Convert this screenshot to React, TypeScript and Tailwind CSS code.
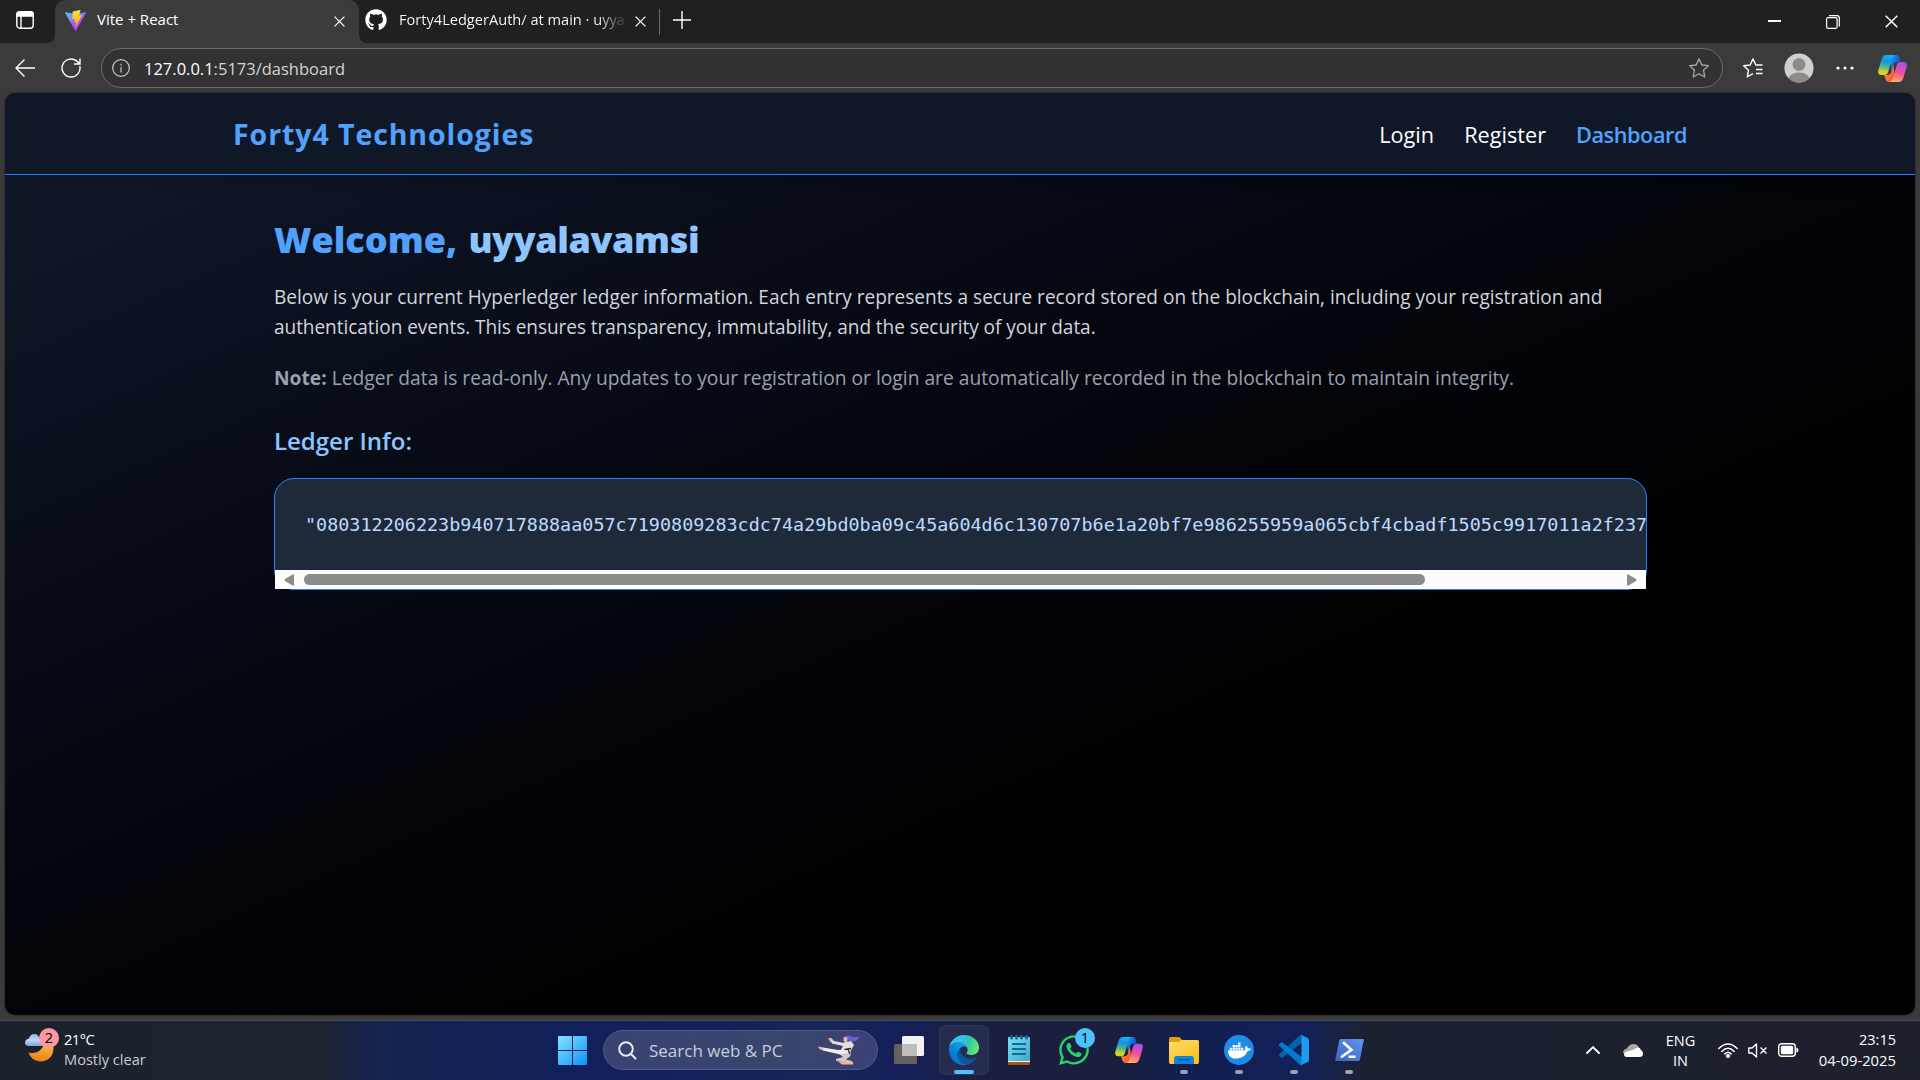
import type { ReactNode } from "react";
import { FaDocker, FaGithub, FaWhatsapp } from "react-icons/fa";

const HASH =
  '"080312206223b940717888aa057c7190809283cdc74a29bd0ba09c45a604d6c130707b6e1a20bf7e986255959a065cbf4cbadf1505c9917011a2f237';

function ViteLogo() {
  return (
    <svg viewBox="0 0 256 257" className="h-[21px] w-[21px]">
      <defs>
        <linearGradient id="viteA" x1="0" y1="0" x2="0.6" y2="0.8">
          <stop offset="0" stopColor="#41d1ff" />
          <stop offset="1" stopColor="#bd34fe" />
        </linearGradient>
        <linearGradient id="viteB" x1="0.4" y1="0" x2="0.5" y2="1">
          <stop offset="0" stopColor="#ffea83" />
          <stop offset="0.1" stopColor="#ffdd35" />
          <stop offset="1" stopColor="#ffa800" />
        </linearGradient>
      </defs>
      <path fill="url(#viteA)" d="M255.153 37.938L134.897 252.976c-2.483 4.44-8.862 4.466-11.382.048L.875 37.958c-2.746-4.814 1.371-10.646 6.827-9.67l120.385 21.517a6.537 6.537 0 0 0 2.322-.004l117.867-21.483c5.438-.991 9.574 4.796 6.877 9.62Z" />
      <path fill="url(#viteB)" d="M185.432.063L96.44 17.501a3.268 3.268 0 0 0-2.634 3.014l-5.474 92.456a3.268 3.268 0 0 0 3.997 3.378l24.777-5.718c2.318-.535 4.413 1.507 3.936 3.838l-7.361 36.047c-.495 2.426 1.782 4.5 4.151 3.78l15.304-4.649c2.372-.72 4.652 1.36 4.15 3.788l-11.698 56.621c-.732 3.542 3.979 5.473 5.943 2.437l1.313-2.028l72.516-144.72c1.215-2.423-.88-5.186-3.54-4.672l-25.505 4.922c-2.396.462-4.435-1.77-3.759-4.114l16.646-57.705c.677-2.35-1.37-4.583-3.769-4.113Z" />
    </svg>
  );
}

function Cross({ className }: { className: string }) {
  return (
    <svg viewBox="0 0 13 13" className={className} fill="none" stroke="#fff" strokeWidth="1.5">
      <path d="M.7.7l11.6 11.6M12.3.7L.7 12.3" />
    </svg>
  );
}

function CopilotLogo({ className }: { className: string }) {
  return (
    <svg viewBox="0 0 29 27" className={className}>
      <defs>
        <linearGradient id="cpL" x1="0.5" y1="0" x2="0.35" y2="1">
          <stop offset="0" stopColor="#0fb4f2" />
          <stop offset="0.3" stopColor="#1a8fe3" />
          <stop offset="0.6" stopColor="#52b788" />
          <stop offset="0.85" stopColor="#c5d82c" />
          <stop offset="1" stopColor="#fdc90a" />
        </linearGradient>
        <linearGradient id="cpR" x1="0.6" y1="0" x2="0.4" y2="1">
          <stop offset="0" stopColor="#a94df0" />
          <stop offset="0.5" stopColor="#f0509b" />
          <stop offset="0.85" stopColor="#fb8c6c" />
          <stop offset="1" stopColor="#ffb35c" />
        </linearGradient>
        <linearGradient id="cpT" x1="0" y1="0" x2="1" y2="0.6">
          <stop offset="0.3" stopColor="#1b9cf0" />
          <stop offset="1" stopColor="#1136b8" />
        </linearGradient>
        <linearGradient id="cpB" x1="0" y1="0" x2="1" y2="0.6">
          <stop offset="0" stopColor="#ff9a3c" />
          <stop offset="1" stopColor="#f04a35" />
        </linearGradient>
      </defs>
      <path fill="url(#cpT)" d="M8.5 0H18c2.3 0 3 1.2 3.6 3.3L22.7 7h-3.4c-2 0-3 .9-3.6 2.8l-2 7L12 6z" />
      <path fill="url(#cpB)" d="M20.5 27H11c-2.3 0-3-1.2-3.6-3.3L6.3 19.9h3.4c2 0 3-.9 3.6-2.8l2-7L17 21z" />
      <path fill="url(#cpL)" d="M8.5 0H17c-2 .9-2.8 3-3.6 6l-3 10.3c-.8 2.6-1.8 3.6-4 3.6H3.2C.4 19.9-.4 17.8.4 15L3.6 4.2C4.6 1.2 5.9 0 8.5 0z" />
      <path fill="url(#cpR)" d="M20.5 27H12c2-.9 2.8-3 3.6-6l3-10.3c.8-2.6 1.8-3.6 4-3.6h3.2c2.8 0 3.6 2.1 2.8 4.9L25.4 22.8C24.4 25.8 23.1 27 20.5 27z" />
    </svg>
  );
}

function EdgeLogo() {
  return (
    <svg viewBox="0 0 256 256" className="h-[30px] w-[30px]">
      <defs>
        <linearGradient id="edA" x1="0.2" y1="0.5" x2="1" y2="0.5">
          <stop offset="0" stopColor="#0c59a4" />
          <stop offset="1" stopColor="#114a8b" />
        </linearGradient>
        <linearGradient id="edB" x1="0.9" y1="0.3" x2="0.3" y2="0.9">
          <stop offset="0" stopColor="#1b9de2" />
          <stop offset="0.3" stopColor="#1595df" />
          <stop offset="0.7" stopColor="#0680d7" />
          <stop offset="1" stopColor="#0078d4" />
        </linearGradient>
        <linearGradient id="edC" x1="0" y1="0.3" x2="1" y2="0.6">
          <stop offset="0" stopColor="#35c1f1" />
          <stop offset="0.35" stopColor="#34c1ed" />
          <stop offset="0.65" stopColor="#36c7a0" />
          <stop offset="1" stopColor="#66eb6e" />
        </linearGradient>
      </defs>
      <path fill="url(#edA)" d="M231.07 190.54c-3.4 1.8-6.9 3.3-10.54 4.69a101.9 101.9 0 0 1-35.85 6.46c-47.21 0-88.35-32.44-88.35-74.15.12-11.38 6.42-21.85 16.46-27.3-42.8 1.8-53.8 46.37-53.8 72.56 0 73.88 68.15 81.5 82.8 81.5 7.96 0 19.9-2.28 27.15-4.55l1.3-.4a128.34 128.34 0 0 0 66.62-52.78 4 4 0 0 0-5.8-6.01z" />
      <path fill="url(#edB)" d="M105.73 241.42a79.2 79.2 0 0 1-22.74-21.32 80.72 80.72 0 0 1 29.53-119.98c3.12-1.47 8.46-4.1 15.56-4a32.5 32.5 0 0 1 25.69 13.1 31.88 31.88 0 0 1 6.35 18.64c0-.2 24.49-79.6-80.11-79.6C36.03 48.27 0 90.03 0 126.7a130.48 130.48 0 0 0 12.05 55.99 128 128 0 0 0 156.39 67.11 75.53 75.53 0 0 1-62.61-8.32z" />
      <path fill="url(#edC)" d="M152.32 148.87c-.8 1.06-3.3 2.5-3.3 5.66 0 2.6 1.7 5.12 4.73 7.23 14.37 10 41.49 8.68 41.56 8.68 10.77-.02 21.14-2.95 30.4-8.46a61.98 61.98 0 0 0 30.4-53.43c.26-22.36-8-37.22-11.34-43.82C223.6 23.24 177.78.01 128 .01a128 128 0 0 0-128 126.17c.48-36.55 36.8-66.05 80-66.05 3.5 0 23.46.34 42.01 10.07 16.34 8.58 24.9 18.94 30.86 29.21 6.18 10.67 7.28 24.15 7.28 29.52 0 5.37-2.74 13.33-7.83 19.94z" />
    </svg>
  );
}

function VsCodeLogo() {
  return (
    <svg viewBox="0 0 100 100" className="h-[30px] w-[30px]">
      <path fill="#0065a9" d="M96.46 10.8L75.86.88a6.23 6.23 0 0 0-7.1 1.2L1.3 63.55a4.17 4.17 0 0 0 0 6.16l5.5 5.01a4.17 4.17 0 0 0 5.33.24L93.4 13.4C96.1 11.33 100 13.26 100 16.66v-.24a6.25 6.25 0 0 0-3.54-5.63z" />
      <path fill="#007acc" d="M96.46 89.2l-20.6 9.92a6.23 6.23 0 0 1-7.1-1.2L1.3 36.45a4.17 4.17 0 0 1 0-6.16l5.5-5.01a4.17 4.17 0 0 1 5.33-.24L93.4 86.6C96.1 88.67 100 86.74 100 83.34v.24a6.25 6.25 0 0 1-3.54 5.63z" />
      <path fill="#1f9cf0" d="M75.86 99.13a6.24 6.24 0 0 1-7.1-1.21c2.3 2.3 6.24.67 6.24-2.59V4.67c0-3.26-3.94-4.89-6.24-2.59a6.24 6.24 0 0 1 7.1-1.21l20.6 9.91A6.25 6.25 0 0 1 100 16.41v67.17a6.25 6.25 0 0 1-3.54 5.63z" />
    </svg>
  );
}

function NotepadIcon() {
  return (
    <svg viewBox="0 0 22 30" className="h-[30px] w-[22px]">
      <defs>
        <linearGradient id="np" x1="0" y1="0" x2="1" y2="1">
          <stop offset="0" stopColor="#7fdcf2" />
          <stop offset="1" stopColor="#3fa9cd" />
        </linearGradient>
      </defs>
      <rect y="23" width="22" height="7" rx="1" fill="#a4571c" />
      <rect y="22" width="22" height="5" fill="#f4f4f4" />
      <rect y="2" width="22" height="24" rx="1" fill="url(#np)" />
      <g fill="#0f6c93">
        <rect x="2" y="0" width="3" height="4.5" rx="1.5" />
        <rect x="7" y="0" width="3" height="4.5" rx="1.5" />
        <rect x="12" y="0" width="3" height="4.5" rx="1.5" />
        <rect x="17" y="0" width="3" height="4.5" rx="1.5" />
        <rect x="4" y="8" width="14" height="2" />
        <rect x="4" y="13" width="14" height="2" />
        <rect x="4" y="18" width="14" height="2" />
      </g>
    </svg>
  );
}

function FolderIcon() {
  return (
    <svg viewBox="0 0 30 27" className="h-[27px] w-[30px]">
      <defs>
        <linearGradient id="fo" x1="0" y1="0" x2="0.6" y2="1">
          <stop offset="0" stopColor="#ffdc6b" />
          <stop offset="1" stopColor="#fdbf1f" />
        </linearGradient>
      </defs>
      <path fill="#e3a008" d="M0 2Q0 0 1.5 0H9.5Q10.5 0 11.2.8L13 3H28V12H0z" />
      <path fill="url(#fo)" d="M0 5H10L12.5 3H28.5Q30 3 30 4.5V25Q30 27 28.5 27H1.5Q0 27 0 25z" />
      <path fill="#1283d8" d="M5 27V22Q5 19 8 19H22Q25 19 25 22V27z" />
      <path fill="#0b5394" d="M8.5 22.2H21.5V23.4H8.5z" />
    </svg>
  );
}

function PowerShellIcon() {
  return (
    <svg viewBox="0 0 29 22" className="h-[22px] w-[29px]">
      <defs>
        <linearGradient id="ps" x1="1" y1="0" x2="0" y2="1">
          <stop offset="0" stopColor="#5f97f2" />
          <stop offset="1" stopColor="#3a63c0" />
        </linearGradient>
      </defs>
      <path fill="url(#ps)" d="M5.6 0H28Q29 0 28.8 1L24.8 21Q24.5 22 23.5 22H1Q0 22 .2 21L4.2 1Q4.5 0 5.6 0z" />
      <path d="M8 3.3L16.5 10.8L6 18.3M13.5 17.8H20.5" fill="none" stroke="#fff" strokeWidth="2.6" />
    </svg>
  );
}

function KarateFigure() {
  return (
    <svg viewBox="0 0 42 30" className="h-[30px] w-[42px]">
      <path fill="#6a5fd0" d="M25 3Q27 -.5 31 .8Q35 3 41 1.5Q40 6 35 6.5L29.5 5z" />
      <path fill="#eab99a" d="M25.5 2.5L29 2L29.5 6.5L27 7.5Q25 6 25.5 2.5z" />
      <path fill="#eab99a" d="M10 3.5L13.5 3L16 6L13 7.5z" />
      <path fill="#e6dede" d="M13 5.5L25 7.8L33 6L36 10L32 17L22 16.5L25 11L14 8.5z" />
      <path fill="#f3ece9" d="M5 12.5L20 15L32 15L33 19L28 22.5L22 19.5L5 15.5z" />
      <path fill="#eab99a" d="M0 11.5L5.5 12.5L5 15.5L1.5 14z" />
      <path fill="#cfc6c9" d="M22 19.5L32 17.5L32.5 21L28 24.5L34 26L34 28L18 26L18 24L25 22z" />
      <path fill="#eab99a" d="M20 26.5L35 27L35 29.5L24 29.5z" />
      <path d="M26.5 14.5L33 13.5M30 14.5L32 19" stroke="#2c2b3c" strokeWidth="1.4" />
    </svg>
  );
}

function WeatherIcon() {
  return (
    <svg viewBox="0 0 34 34" className="h-[34px] w-[34px]">
      <defs>
        <linearGradient id="moon" x1="0.6" y1="0" x2="0.3" y2="1">
          <stop offset="0" stopColor="#f8b73a" />
          <stop offset="1" stopColor="#ee7a1e" />
        </linearGradient>
        <linearGradient id="cloud" x1="0" y1="0" x2="0" y2="1">
          <stop offset="0" stopColor="#8fb0e6" />
          <stop offset="0.5" stopColor="#c5d6f4" />
          <stop offset="1" stopColor="#7fa2de" />
        </linearGradient>
      </defs>
      <path fill="url(#moon)" d="M3.5 20.5Q14 23.5 19.5 12L28 13Q29.5 19 26 24.5Q22 29.5 15 29.5Q6 28.5 3.5 20.5z" />
      <path fill="url(#cloud)" d="M4 14Q0 14 0 10.5Q.5 7 4 6.5Q5 2 9.5 2Q13 2 14 5.5Q19 6 19 10.5Q19 14 16 14z" />
    </svg>
  );
}

function TaskItem({ running = false, children }: { running?: boolean; children: ReactNode }) {
  return (
    <div className="relative flex h-[50px] w-[55px] items-center justify-center">
      <div className="flex">{children}</div>
      {running && <div className="absolute bottom-[1px] left-[23.5px] h-1 w-2 rounded-full bg-[#9a9fb2]" />}
    </div>
  );
}

function TabStrip() {
  return (
    <div className="flex h-[43px] shrink-0 items-center bg-[#202020]">
      <div className="flex h-full w-[55px] items-center pb-[3px] pl-4">
        <svg viewBox="0 0 18 18" className="h-[18px] w-[18px]" fill="none" stroke="#fff" strokeWidth="1.4">
          <rect x=".8" y=".8" width="16.4" height="16.4" rx="3" />
          <path d="M1 2.5Q1 1 3 1H15Q17 1 17 2.5V5H1z" fill="#fff" />
          <path d="M5 5V17" />
        </svg>
      </div>
      <div className="relative flex h-full w-[304px] items-center rounded-t-[10px] bg-[#3b3b3b] pb-[3px] pl-[10px]">
        <svg viewBox="0 0 9 9" className="absolute bottom-0 -left-[9px] h-[9px] w-[9px]">
          <path d="M9 0V9H0Q9 9 9 0z" fill="#3b3b3b" />
        </svg>
        <svg viewBox="0 0 9 9" className="absolute -right-[9px] bottom-0 h-[9px] w-[9px]">
          <path d="M0 0V9H9Q0 9 0 0z" fill="#3b3b3b" />
        </svg>
        <ViteLogo />
        <span className="-mt-px ml-[11px] flex-1 text-[15px] text-white">Vite + React</span>
        <Cross className="mt-[3px] mr-[14px] h-[11px] w-[11px]" />
      </div>
      <div className="flex h-full items-center pb-[3px] pl-[6px]">
        <FaGithub className="h-[22px] w-[22px] text-white" />
        <span className="ml-[12px] w-[225px] bg-linear-to-r from-white from-88% to-[#3a3a3a] bg-clip-text text-[14.6px] whitespace-nowrap text-transparent">
          Forty4LedgerAuth/ at main · uyya
        </span>
        <Cross className="mt-[3px] ml-[11px] h-[11px] w-[11px]" />
        <div className="mt-[3px] ml-[13px] h-[26px] w-px bg-[#6a6a6a]" />
        <svg viewBox="0 0 18 18" className="ml-[13px] h-[18px] w-[18px]" fill="none" stroke="#fff" strokeWidth="1.4">
          <path d="M9 0V18M0 9H18" />
        </svg>
      </div>
      <div className="ml-auto flex items-center pr-[22px]">
        <div className="mr-[45px] -mt-px h-[1.5px] w-[13px] bg-white" />
        <svg viewBox="0 0 14 14" className="mr-[45px] h-[14px] w-[14px]" fill="none" stroke="#fff" strokeWidth="1.2">
          <rect x=".6" y="2.6" width="10.5" height="10.7" rx="1.5" />
          <path d="M3 .7H11Q13.3.7 13.3 3V11.5" />
        </svg>
        <Cross className="h-[13px] w-[13px]" />
      </div>
    </div>
  );
}

function Toolbar() {
  return (
    <div className="flex h-[50px] shrink-0 items-center">
      <svg viewBox="0 0 20 18" className="ml-[15px] h-[18px] w-5" fill="none" stroke="#fff" strokeWidth="1.4">
        <path d="M9.5.5L1 9L9.5 17.5M1 9H20" />
      </svg>
      <svg viewBox="0 0 20 20" className="ml-[26px] h-5 w-5" fill="none" stroke="#fff" strokeWidth="1.4">
        <path d="M18.8 8A9 9 0 1 1 15.5 2.9L18.8 5.6M19 .5V6H13" />
      </svg>
      <div className="ml-5 flex h-10 w-[1622px] items-center rounded-full border border-[#6e6e6e] bg-[#323232] pl-[10px]">
        <svg viewBox="0 0 18 18" className="h-[18px] w-[18px]" fill="none" stroke="#c8c8c8" strokeWidth="1.2">
          <circle cx="9" cy="9" r="8.3" />
          <path d="M9 8V13.5M9 4.7V6.4" />
        </svg>
        <span className="mt-[2px] ml-[14px] flex-1 text-[16.5px] text-[#d4d4d4]">
          <span className="text-white">127.0.0.1</span>:5173/dashboard
        </span>
        <svg viewBox="0 0 20 20" className="mr-[13px] h-5 w-5" fill="none" stroke="#a8a8a8" strokeWidth="1.3" strokeLinejoin="round">
          <path d="M10 .8L12.8 7L19.3 7.7L14.5 12.2L15.8 19L10 15.7L4.2 19L5.5 12.2L.7 7.7L7.2 7z" />
        </svg>
      </div>
      <svg viewBox="0 0 20 20" className="ml-5 h-5 w-5" fill="none" stroke="#fff" strokeWidth="1.4" strokeLinejoin="round">
        <path d="M19.5 7H12.8L10 .8L7.2 7L.7 7.7L5.5 12.2L4.2 19L10 15.7M13 11.5H19.5M13 15.5H19.5" />
      </svg>
      <svg viewBox="0 0 30 30" className="ml-[21px] h-[30px] w-[30px]">
        <defs>
          <clipPath id="avatar">
            <circle cx="15" cy="15" r="14.6" />
          </clipPath>
        </defs>
        <g clipPath="url(#avatar)">
          <rect width="30" height="30" fill="#d2d0ce" />
          <circle cx="15" cy="11.5" r="6.5" fill="#8f8b88" />
          <ellipse cx="15" cy="27.5" rx="11" ry="8" fill="#8f8b88" />
        </g>
      </svg>
      <svg viewBox="0 0 18 4" className="ml-[22px] h-1 w-[18px]" fill="#fff">
        <circle cx="2" cy="2" r="1.6" />
        <circle cx="9" cy="2" r="1.6" />
        <circle cx="16" cy="2" r="1.6" />
      </svg>
      <CopilotLogo className="ml-6 h-[27px] w-[29px]" />
    </div>
  );
}

function Dashboard() {
  return (
    <div className="mx-[5px] flex h-[922px] shrink-0 flex-col overflow-hidden rounded-[10px] shadow-[0_0_2px_#111]">
      <nav className="relative flex h-[82px] shrink-0 items-center justify-between border-b border-blue-500 bg-gray-900 pr-[228px] pl-[228px] shadow-lg">
        <span className="pt-[2px] text-[28.5px] leading-[45px] font-bold tracking-[0.92px] text-blue-400">Forty4 Technologies</span>
        <div className="flex gap-[30px] pt-[4px] text-[21.7px] text-white">
          <span>Login</span>
          <span>Register</span>
          <span className="font-semibold tracking-[-0.45px] text-blue-400">Dashboard</span>
        </div>
      </nav>
      <main className="flex flex-1 flex-col bg-linear-to-br from-gray-900 to-black pt-[41px] pr-[268px] pl-[269px]">
        <h1 className="text-[36px] leading-[48px] font-extrabold text-blue-400">
          Welcome, <span className="ml-[2px] tracking-[-0.4px] text-blue-300">uyyalavamsi</span>
        </h1>
        <p className="mt-[18px] text-[19.06px] leading-[30px] whitespace-nowrap text-gray-300">
          Below is your current Hyperledger ledger information. Each entry represents a secure record stored on the blockchain, including your registration and
          <br />
          <span className="tracking-[-0.065px]">authentication events. This ensures transparency, immutability, and the security of your data.</span>
        </p>
        <p className="mt-[21px] text-[19.23px] leading-[30px] whitespace-nowrap text-gray-400">
          <strong className="font-bold">Note:</strong> Ledger data is read-only. Any updates to your registration or login are automatically recorded in the blockchain to maintain integrity.
        </p>
        <h2 className="mt-[30px] text-[24px] leading-9 font-semibold text-blue-300">Ledger Info:</h2>
        <div className="relative mt-[19px] h-[112px] rounded-[20px] border border-blue-500 bg-gray-800">
          <pre className="overflow-hidden pt-[31px] pl-[30px] font-['DejaVu_Sans_Mono',monospace] text-[18.4px] leading-[30px] tracking-[0.02px] text-blue-200">
            {HASH}
          </pre>
          <div className="absolute inset-x-0 bottom-0 flex h-[19px] items-center justify-between bg-[#fcfcfc] px-[9px]">
            <svg viewBox="0 0 10 12" className="h-3 w-[10px]">
              <path d="M10 1V11Q10 12 9 11.7L1 7Q0 6 1 5L9 .3Q10 0 10 1z" fill="#8b8b8b" />
            </svg>
            <div className="ml-[10px] h-[11px] w-[1121px] rounded-full bg-[#8b8b8b]" />
            <svg viewBox="0 0 10 12" className="ml-auto h-3 w-[10px]">
              <path d="M0 1V11Q0 12 1 11.7L9 7Q10 6 9 5L1 .3Q0 0 0 1z" fill="#8b8b8b" />
            </svg>
          </div>
        </div>
      </main>
    </div>
  );
}

function Taskbar() {
  return (
    <div className="mt-[5px] flex h-[60px] shrink-0 items-start border-t border-[#444a5c] bg-[linear-gradient(90deg,#1c222c_0px,#1c232e_320px,#15234c_365px,#12205a_560px,#141f5c_620px,#172557_830px,#141f5a_900px,#1a1f40_970px,#1a1f3e_1110px,#121f52_1200px,#13205a_1300px,#1c2130_1370px,#1c212c_1920px)] text-white">
      <div className="flex w-[558px] pt-2 pl-[25px]">
        <div className="relative h-[34px] w-[39px] pt-[3px]">
          <WeatherIcon />
          <div className="absolute top-[-1px] left-[14px] flex h-5 w-5 items-center justify-center rounded-full bg-[#ff97a3] text-[14.5px] text-black">2</div>
        </div>
        <div className="flex flex-col text-[14.6px] leading-5">
          <span className="tracking-[-0.5px]">21°C</span>
          <span className="text-[#c9ccd2]">Mostly clear</span>
        </div>
      </div>
      <svg viewBox="0 0 29 29" className="mt-[15px] h-[29px] w-[29px]">
        <defs>
          <linearGradient id="win" gradientUnits="userSpaceOnUse" x1="0" y1="0" x2="29" y2="29">
            <stop offset="0" stopColor="#86e2fd" />
            <stop offset="1" stopColor="#0a93fb" />
          </linearGradient>
        </defs>
        <path d="M0 1Q0 0 1 0H14V14H0zM15 0H28Q29 0 29 1V14H15zM0 15H14V29H1Q0 29 0 28zM15 15H29V28Q29 29 28 29H15z" fill="url(#win)" />
      </svg>
      <div className="mt-[9px] ml-4 flex h-10 w-[275px] items-center rounded-full border border-[#4f5a8c] bg-[linear-gradient(90deg,#3a4272,#38456c_60%,#3b4274)] pl-[14px]">
        <svg viewBox="0 0 19 19" className="h-[19px] w-[19px]" fill="none" stroke="#e8eaf2" strokeWidth="2" strokeLinecap="round">
          <circle cx="8" cy="8" r="6.8" />
          <path d="M13 13L17.5 17.5" />
        </svg>
        <span className="ml-3 flex-1 pt-px text-[17px] text-[#c9cde0]">Search web &amp; PC</span>
        <div className="mr-[17px]">
          <KarateFigure />
        </div>
      </div>
      <div className="mt-1 ml-[3.5px] flex">
        <TaskItem>
          <svg viewBox="0 0 30 28" className="h-7 w-[30px]">
            <rect x="0" y="8" width="23" height="20" rx="1.5" fill="#626262" />
            <rect x="8" y="0" width="22" height="20" rx="1.5" fill="#f2f2f2" />
            <rect x="8" y="8" width="15" height="12" fill="#bdbdbd" />
          </svg>
        </TaskItem>
        <div className="relative flex h-[50px] w-[55px] items-center justify-center">
          <div className="flex h-[50px] w-[50px] items-center justify-center rounded-[6px] border border-[#30365a] bg-[#262b50]">
            <EdgeLogo />
          </div>
          <div className="absolute bottom-[1px] left-[17.5px] h-1 w-5 rounded-full bg-[#4cc2ff]" />
        </div>
        <TaskItem>
          <NotepadIcon />
        </TaskItem>
        <TaskItem>
          <FaWhatsapp className="h-[34px] w-[34px] text-[#25d366]" />
          <div className="absolute top-[3px] left-[28.5px] flex h-5 w-5 items-center justify-center rounded-full bg-[#4cc2ff] text-[14.5px] text-black">1</div>
        </TaskItem>
        <TaskItem>
          <CopilotLogo className="h-[26px] w-7" />
        </TaskItem>
        <TaskItem running>
          <FolderIcon />
        </TaskItem>
        <TaskItem running>
          <div className="flex h-[30px] w-[30px] items-center justify-center rounded-full bg-[#1d8ce8]">
            <FaDocker className="h-[23px] w-[23px] text-white" />
          </div>
        </TaskItem>
        <TaskItem running>
          <VsCodeLogo />
        </TaskItem>
        <TaskItem running>
          <PowerShellIcon />
        </TaskItem>
      </div>
      <div className="ml-auto flex h-[58px] items-center pr-6 text-[14.5px] leading-5">
        <svg viewBox="0 0 14 8" className="h-2 w-[14px]" fill="none" stroke="#fff" strokeWidth="1.8" strokeLinecap="round">
          <path d="M1 7L7 1.2L13 7" />
        </svg>
        <svg viewBox="0 0 20 13" className="ml-[23px] h-[13px] w-5">
          <path fill="#a7a9ad" d="M0 9Q0 5 4 4.5Q6 0 10.5 0Q14.5 0 16 3.5L8 10z" />
          <path fill="#fff" d="M3.5 13Q0 12.5 1.5 8.5L6 7L11 5.5Q16 1.5 18 6Q20 7 20 9.5Q20 13 16.5 13z" />
        </svg>
        <div className="ml-[22px] flex w-[31px] flex-col items-center pt-px">
          <span>ENG</span>
          <span>IN</span>
        </div>
        <svg viewBox="0 0 20 15" className="ml-[22px] h-[15px] w-5" fill="none" stroke="#fff" strokeWidth="1.5" strokeLinecap="round">
          <path d="M.8 5.5Q10-3.5 19.2 5.5M3.8 8.5Q10 2 16.2 8.5M6.8 11Q10 7.5 13.2 11" />
          <circle cx="10" cy="13" r="1.3" fill="#fff" />
        </svg>
        <svg viewBox="0 0 20 15" className="ml-[10px] h-[15px] w-5" fill="none" stroke="#fff" strokeWidth="1.4" strokeLinejoin="round">
          <path d="M.8 5V10H4L8.5 14V1L4 5zM12.5 4.5L18.5 10.5M18.5 4.5L12.5 10.5" />
        </svg>
        <svg viewBox="0 0 21 14" className="ml-[10px] h-[14px] w-[21px]">
          <rect x=".7" y=".7" width="16.6" height="12.6" rx="3" fill="none" stroke="#fff" strokeWidth="1.4" />
          <rect x="2.8" y="2.8" width="12.4" height="8.4" rx="1.5" fill="#fff" />
          <path d="M18.3 4.5Q20.5 5 20.5 7Q20.5 9 18.3 9.5z" fill="#fff" />
        </svg>
        <div className="ml-[18px] flex w-[79px] flex-col items-end">
          <span>23:15</span>
          <span className="text-[14.8px]">04-09-2025</span>
        </div>
      </div>
    </div>
  );
}

export default function App() {
  return (
    <div className="flex h-[1080px] w-[1920px] flex-col overflow-hidden bg-[#3b3b3b] font-['Open_Sans',sans-serif]">
      <TabStrip />
      <Toolbar />
      <Dashboard />
      <Taskbar />
    </div>
  );
}
